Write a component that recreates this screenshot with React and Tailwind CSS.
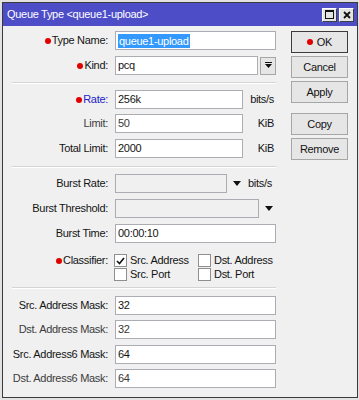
import React from "react";

// small red "required" marker
const Dot = () => (
  <span className="inline-block w-[6px] h-[6px] rounded-full bg-[#e00000] mr-[1px] shrink-0" />
);

const Row = ({ label, dot, tone = "dark", className = "", children }) => {
  const color =
    tone === "blue"
      ? "text-[#2222c8]"
      : tone === "gray"
      ? "text-[#3c3c3c]"
      : "text-[#141414]";
  return (
    <div className={`flex items-center h-[19px] ${className}`}>
      <div className="w-[105px] flex items-center justify-end">
        {dot && <Dot />}
        <span className={color}>{label}</span>
      </div>
      <div className="ml-[7px] flex items-center h-full">{children}</div>
    </div>
  );
};

const Field = ({ value, width, disabled, selected, tone = "dark" }) => (
  <div
    className={`h-[19px] border border-[#abadb3] flex items-center pl-[2px] ${width} ${
      disabled ? "bg-[#f0f0f0]" : "bg-white"
    }`}
  >
    {selected ? (
      <span className="bg-[#3399ff] text-white px-[1px] leading-[14px]">{value}</span>
    ) : (
      <span className={tone === "gray" ? "text-[#383838]" : "text-[#141414]"}>{value}</span>
    )}
  </div>
);

const Unit = ({ children }) => (
  <span className="w-[33px] text-right pr-[2px] text-[#141414]">{children}</span>
);

const Arrow = () => (
  <svg width="8" height="5" viewBox="0 0 8 5" className="shrink-0">
    <polygon points="0,0 8,0 4,5" fill="#111" />
  </svg>
);

const Check = ({ checked, label, className = "" }) => (
  <div className={`flex items-center h-[13px] ${className}`}>
    <div className="w-[13px] h-[13px] border border-[#8f8f8f] bg-white flex items-center justify-center">
      {checked && (
        <svg width="9" height="8" viewBox="0 0 9 8">
          <path d="M1 4 L3.5 6.5 L8 1" stroke="#111" strokeWidth="1.6" fill="none" />
        </svg>
      )}
    </div>
    <span className="ml-[3px] text-[#141414]">{label}</span>
  </div>
);

const Separator = ({ className = "" }) => (
  <div className={`ml-[9px] w-[264px] h-0 border-t border-t-[#d4d4d4] border-b border-b-white ${className}`} />
);

const Btn = ({ children, primary, className = "" }) => (
  <button
    className={`h-[22px] w-[57px] flex items-center justify-center bg-[#e6e6e6] border ${
      primary ? "border-[#3c3c3c]" : "border-[#a6a6a6]"
    } text-[#141414] ${className}`}
  >
    {children}
  </button>
);

const TitleBtn = ({ children }) => (
  <div className="w-[15px] h-[14px] bg-[#e4e4e4] border border-t-white border-l-white border-r-[#404040] border-b-[#404040] flex items-center justify-center">
    {children}
  </div>
);

export default function App() {
  return (
    <div className="w-[359px] h-[400px] bg-[#e2e2e2] pt-[2px] pl-[2px] font-['Liberation_Sans',Arial,sans-serif] text-[11px] tracking-[-0.3px] leading-none select-none">
      <div className="w-[356px] h-[396px] border border-[#3a3a3a] bg-[#f0f0f0] flex flex-col">
        {/* title bar */}
        <div className="h-[23px] bg-[#4d4dc8] flex items-center justify-between pl-[4px] pr-[3px]">
          <span className="text-white">Queue Type &lt;queue1-upload&gt;</span>
          <div className="flex gap-[2px]">
            <TitleBtn>
              <svg width="9" height="9" viewBox="0 0 9 9">
                <rect x="0.5" y="0.5" width="8" height="8" fill="none" stroke="#111" />
                <rect x="0" y="0" width="9" height="2" fill="#111" />
              </svg>
            </TitleBtn>
            <TitleBtn>
              <svg width="8" height="8" viewBox="0 0 8 8">
                <path d="M1 1 L7 7 M7 1 L1 7" stroke="#111" strokeWidth="1.8" />
              </svg>
            </TitleBtn>
          </div>
        </div>

        {/* body */}
        <div className="flex pt-[5px]">
          <div className="w-[273px] flex flex-col">
            <Row label="Type Name:" dot>
              <Field value="queue1-upload" width="w-[161px]" selected />
            </Row>
            <Row label="Kind:" dot className="mt-[6px]">
              <Field value="pcq" width="w-[143px]" />
              <div className="ml-[2px] w-[16px] h-[18px] bg-[#e6e6e6] border border-[#a6a6a6] flex items-center justify-center">
                <svg width="7" height="7" viewBox="0 0 7 7">
                  <rect x="0" y="0" width="7" height="1" fill="#111" />
                  <polygon points="0,2 7,2 3.5,6" fill="#111" />
                </svg>
              </div>
            </Row>

            <Separator className="mt-[7px]" />

            <Row label="Rate:" dot tone="blue" className="mt-[6px]">
              <Field value="256k" width="w-[128px]" />
              <Unit>bits/s</Unit>
            </Row>
            <Row label="Limit:" tone="gray" className="mt-[5px]">
              <Field value="50" width="w-[128px]" tone="gray" />
              <Unit>KiB</Unit>
            </Row>
            <Row label="Total Limit:" className="mt-[6px]">
              <Field value="2000" width="w-[128px]" />
              <Unit>KiB</Unit>
            </Row>

            <Separator className="mt-[8px]" />

            <Row label="Burst Rate:" className="mt-[6px]">
              <Field value="" width="w-[112px]" disabled />
              <span className="ml-[6px]">
                <Arrow />
              </span>
              <span className="ml-[7px] text-[#141414]">bits/s</span>
            </Row>
            <Row label="Burst Threshold:" className="mt-[6px]">
              <Field value="" width="w-[144px]" disabled />
              <span className="ml-[6px]">
                <Arrow />
              </span>
            </Row>
            <Row label="Burst Time:" className="mt-[6px]">
              <Field value="00:00:10" width="w-[161px]" />
            </Row>

            <div className="flex mt-[11px]">
              <div className="w-[105px] h-[13px] flex items-center justify-end">
                <Dot />
                <span className="text-[#141414]">Classifier:</span>
              </div>
              <div className="ml-[6px] flex flex-col gap-[1px]">
                <div className="flex">
                  <Check checked label="Src. Address" className="w-[84px]" />
                  <Check label="Dst. Address" />
                </div>
                <div className="flex">
                  <Check label="Src. Port" className="w-[84px]" />
                  <Check label="Dst. Port" />
                </div>
              </div>
            </div>

            <Separator className="mt-[6px]" />

            <Row label="Src. Address Mask:" className="mt-[7px]">
              <Field value="32" width="w-[161px]" />
            </Row>
            <Row label="Dst. Address Mask:" tone="gray" className="mt-[5px]">
              <Field value="32" width="w-[161px]" tone="gray" />
            </Row>
            <Row label="Src. Address6 Mask:" className="mt-[6px]">
              <Field value="64" width="w-[161px]" />
            </Row>
            <Row label="Dst. Address6 Mask:" tone="gray" className="mt-[5px]">
              <Field value="64" width="w-[161px]" tone="gray" />
            </Row>
          </div>

          {/* action buttons */}
          <div className="ml-[15px] flex flex-col">
            <Btn primary>
              <Dot />
              <span className="ml-[3px]">OK</span>
            </Btn>
            <Btn className="mt-[3px]">Cancel</Btn>
            <Btn className="mt-[3px]">Apply</Btn>
            <Btn className="mt-[10px]">Copy</Btn>
            <Btn className="mt-[3px]">Remove</Btn>
          </div>
        </div>
      </div>
    </div>
  );
}
